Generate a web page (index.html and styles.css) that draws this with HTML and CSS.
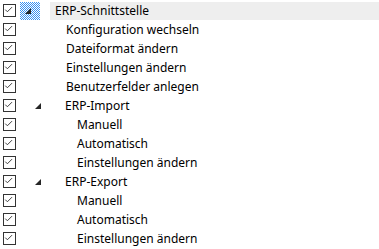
FILE: index.html
```html
<!DOCTYPE html>
<html>
<head>
<meta charset="utf-8">
<link rel="stylesheet" href="styles.css">
</head>
<body>
<div class="tree">
  <div class="row sel">
    <span class="cb"><svg viewBox="0 0 13 13"><polyline points="2.5,6.5 5,9 10.5,3.5"/></svg></span>
    <span class="tw l0"><svg class="focus" width="20" height="18" viewBox="0 0 20 18" shape-rendering="crispEdges">
      <defs><pattern id="dots" width="2" height="2" patternUnits="userSpaceOnUse"><rect width="2" height="2" fill="#ffffff"/><rect x="0" y="0" width="1" height="1" fill="#3a8ff0"/><rect x="1" y="1" width="1" height="1" fill="#3a8ff0"/></pattern></defs>
      <rect width="20" height="18" fill="url(#dots)"/>
      <polygon points="11,6 11,12 5,12" fill="#1c3c78" shape-rendering="auto"/>
    </svg></span>
    <span class="lbl p0">ERP-Schnittstelle</span>
  </div>
  <div class="row">
    <span class="cb"><svg viewBox="0 0 13 13"><polyline points="2.5,6.5 5,9 10.5,3.5"/></svg></span>
    <span class="lbl p1">Konfiguration wechseln</span>
  </div>
  <div class="row">
    <span class="cb"><svg viewBox="0 0 13 13"><polyline points="2.5,6.5 5,9 10.5,3.5"/></svg></span>
    <span class="lbl p1">Dateiformat ändern</span>
  </div>
  <div class="row">
    <span class="cb"><svg viewBox="0 0 13 13"><polyline points="2.5,6.5 5,9 10.5,3.5"/></svg></span>
    <span class="lbl p1">Einstellungen ändern</span>
  </div>
  <div class="row">
    <span class="cb"><svg viewBox="0 0 13 13"><polyline points="2.5,6.5 5,9 10.5,3.5"/></svg></span>
    <span class="lbl p1">Benutzerfelder anlegen</span>
  </div>
  <div class="row">
    <span class="cb"><svg viewBox="0 0 13 13"><polyline points="2.5,6.5 5,9 10.5,3.5"/></svg></span>
    <span class="tw l1"><svg viewBox="0 0 6 6"><polygon points="6,0 6,6 0,6"/></svg></span>
    <span class="lbl pe">ERP-Import</span>
  </div>
  <div class="row">
    <span class="cb"><svg viewBox="0 0 13 13"><polyline points="2.5,6.5 5,9 10.5,3.5"/></svg></span>
    <span class="lbl p2">Manuell</span>
  </div>
  <div class="row">
    <span class="cb"><svg viewBox="0 0 13 13"><polyline points="2.5,6.5 5,9 10.5,3.5"/></svg></span>
    <span class="lbl p2">Automatisch</span>
  </div>
  <div class="row">
    <span class="cb"><svg viewBox="0 0 13 13"><polyline points="2.5,6.5 5,9 10.5,3.5"/></svg></span>
    <span class="lbl p2">Einstellungen ändern</span>
  </div>
  <div class="row">
    <span class="cb"><svg viewBox="0 0 13 13"><polyline points="2.5,6.5 5,9 10.5,3.5"/></svg></span>
    <span class="tw l1"><svg viewBox="0 0 6 6"><polygon points="6,0 6,6 0,6"/></svg></span>
    <span class="lbl pe">ERP-Export</span>
  </div>
  <div class="row">
    <span class="cb"><svg viewBox="0 0 13 13"><polyline points="2.5,6.5 5,9 10.5,3.5"/></svg></span>
    <span class="lbl p2">Manuell</span>
  </div>
  <div class="row">
    <span class="cb"><svg viewBox="0 0 13 13"><polyline points="2.5,6.5 5,9 10.5,3.5"/></svg></span>
    <span class="lbl p2">Automatisch</span>
  </div>
  <div class="row">
    <span class="cb"><svg viewBox="0 0 13 13"><polyline points="2.5,6.5 5,9 10.5,3.5"/></svg></span>
    <span class="lbl p2">Einstellungen ändern</span>
  </div>
</div>
</body>
</html>
```

FILE: styles.css
```css
html, body {
  margin: 0;
  padding: 0;
  background: #ffffff;
}
.tree {
  padding-top: 1px;
  font-family: "Noto Sans", "Open Sans", sans-serif;
  font-size: 12px;
  color: #000000;
}
.row {
  display: flex;
  align-items: center;
  height: 19px;
}
.cb {
  flex: none;
  width: 13px;
  height: 13px;
  margin-left: 3px;
  box-sizing: border-box;
  border: 1px solid #333333;
  background: #ffffff;
  display: flex;
}
.cb svg {
  width: 11px;
  height: 11px;
  margin: 0;
}
.cb polyline {
  fill: none;
  stroke: #333333;
  stroke-width: 1.1;
  transform: translate(-1px, -1px);
}
.tw {
  flex: none;
  display: flex;
  align-items: center;
  justify-content: center;
}
.tw svg {
  width: 6px;
  height: 6px;
}
.tw polygon {
  fill: #262626;
}
.tw.l0 {
  width: 20px;
  height: 18px;
  margin-left: 4px;
}
.tw.l0 svg.focus {
  width: 20px;
  height: 18px;
  display: block;
}
.tw.l1 {
  width: 20px;
  height: 18px;
  margin-left: 12px;
}
.lbl {
  white-space: nowrap;
  line-height: 18px;
}
.sel .lbl {
  flex: 1;
  background: #eeeeee;
  margin-left: 10px;
  padding-left: 5px;
}
.lbl.p1 {
  margin-left: 50px;
}
.lbl.pe {
  margin-left: 17px;
}
.lbl.p2 {
  margin-left: 61px;
}
```
